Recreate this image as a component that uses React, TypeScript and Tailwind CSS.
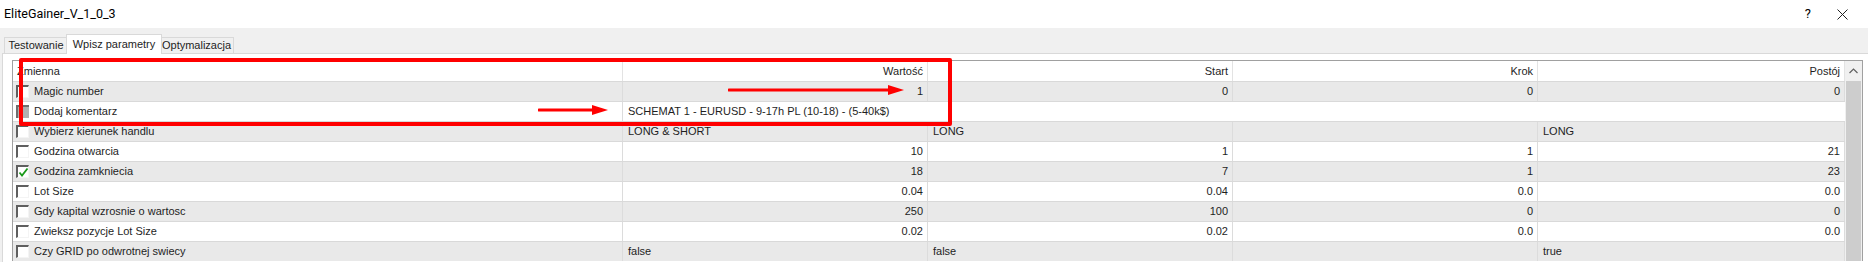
import React from 'react'

type Row = {
    name: string
    box?: 'off' | 'on' | 'grey'
    align?: 'left' | 'right'
    cells?: string[]
    span?: string
}

const rows: Row[] = [
    { name: 'Magic number', align: 'right', cells: ['1', '0', '0', '0'] },
    { name: 'Dodaj komentarz', box: 'grey', span: 'SCHEMAT 1 - EURUSD - 9-17h PL (10-18) - (5-40k$)' },
    { name: 'Wybierz kierunek handlu', align: 'left', cells: ['LONG & SHORT', 'LONG', '', 'LONG'] },
    { name: 'Godzina otwarcia', align: 'right', cells: ['10', '1', '1', '21'] },
    { name: 'Godzina zamkniecia', box: 'on', align: 'right', cells: ['18', '7', '1', '23'] },
    { name: 'Lot Size', align: 'right', cells: ['0.04', '0.04', '0.0', '0.0'] },
    { name: 'Gdy kapital wzrosnie o wartosc', align: 'right', cells: ['250', '100', '0', '0'] },
    { name: 'Zwieksz pozycje Lot Size', align: 'right', cells: ['0.02', '0.02', '0.0', '0.0'] },
    { name: 'Czy GRID po odwrotnej swiecy', align: 'left', cells: ['false', 'false', '', 'true'] },
]

const widths = ['w-[305px]', 'w-[305px]', 'w-[305px]', 'w-[307px]']

const CheckBox = ({ state = 'off' }: { state?: Row['box'] }) => {
    if (state === 'grey') {
        return <span className="block w-[13px] h-[13px] shrink-0 bg-[#b0b0b0] border-t-2 border-l-2 border-t-[#6e6e6e] border-l-[#6e6e6e]" />
    }
    return (
        <span className="relative block w-[13px] h-[13px] shrink-0 bg-white border-t-2 border-l-2 border-r border-b border-t-[#5f5f5f] border-l-[#5f5f5f] border-r-[#f4f4f4] border-b-[#f4f4f4]">
            {state === 'on' && (
                <svg width="11" height="11" viewBox="0 0 11 11" className="absolute left-0 top-0">
                    <path d="M1.5 5.5 L4 8.5 L9.5 1.5" stroke="#1a9a1a" strokeWidth="1.8" fill="none" />
                </svg>
            )}
        </span>
    )
}

const Arrow = ({ x, y, w }: { x: number; y: number; w: number }) => (
    <svg className="absolute" style={{ left: x, top: y - 7 }} width={w} height="14" viewBox={`0 0 ${w} 14`}>
        <line x1="1" y1="7" x2={w - 14} y2="7" stroke="#ff0000" strokeWidth="3" strokeLinecap="round" />
        <polygon points={`${w - 16},2 ${w},7 ${w - 16},12`} fill="#ff0000" />
    </svg>
)

export default function App() {
    return (
        <div className="relative w-[1868px] h-[262px] overflow-hidden bg-[#f0f0f0] font-['Liberation_Sans',Arial,sans-serif] text-[11px] text-[#1e1e1e]">
            {/* title bar */}
            <div className="h-[28px] bg-white flex items-center justify-between pl-[4px] pr-[20px]">
                <span className="font-['Roboto',Arial,sans-serif] text-[12.5px] text-black">EliteGainer_V_1_0_3</span>
                <div className="flex items-center gap-[26px]">
                    <span className="font-['Roboto',Arial,sans-serif] text-[13px] text-black">?</span>
                    <svg width="11" height="11" viewBox="0 0 11 11">
                        <path d="M0.5 0.5 L10.5 10.5 M10.5 0.5 L0.5 10.5" stroke="#222" strokeWidth="1" />
                    </svg>
                </div>
            </div>

            {/* tabs */}
            <div className="flex items-end h-[19px] mt-[6px] ml-[4px]">
                <div className="w-[64px] h-[16px] flex items-center justify-center bg-[#f0f0f0] border border-b-0 border-[#d9d9d9]">Testowanie</div>
                <div className="relative z-10 w-[96px] h-[20px] -mx-[2px] -mb-px flex items-center justify-center bg-white border border-b-0 border-[#d9d9d9]">Wpisz parametry</div>
                <div className="w-[74px] h-[16px] flex items-center justify-center bg-[#f0f0f0] border border-b-0 border-l-0 border-[#d9d9d9]">Optymalizacja</div>
            </div>

            {/* panel */}
            <div className="ml-[2px] w-[1866px] h-[220px] bg-white border-l border-t border-[#d9d9d9] pt-[6px] pl-[9px]">
                <div className="flex w-[1851px] border-t border-l border-r border-[#a0a0a0]">
                    <div className="flex flex-col">
                        <div className="flex h-[20px] bg-white">
                            <div className="w-[610px] border-r border-[#e3e3e3] flex items-center pl-[4px]">Zmienna</div>
                            {['Wartość', 'Start', 'Krok', 'Postój'].map((h, i) => (
                                <div key={h} className={`${widths[i]} border-r border-[#e3e3e3] flex items-center justify-end pr-[4px]`}>{h}</div>
                            ))}
                        </div>
                        {rows.map((r, idx) => (
                            <div key={r.name} className={`flex h-[20px] border-t border-[#d9d9d9] ${idx % 2 === 0 ? 'bg-[#e9e9e9]' : 'bg-white'}`}>
                                <div className="w-[610px] border-r border-[#dcdcdc] flex items-center pl-[3px] gap-[5px]">
                                    <CheckBox state={r.box} />
                                    <span>{r.name}</span>
                                </div>
                                {r.span ? (
                                    <div className="w-[1222px] flex items-center pl-[5px]">{r.span}</div>
                                ) : (
                                    r.cells?.map((c, i) => (
                                        <div
                                            key={i}
                                            className={`${widths[i]} border-r border-[#dcdcdc] flex items-center ${r.align === 'right' ? 'justify-end pr-[4px]' : 'justify-start pl-[5px]'}`}
                                        >
                                            {c}
                                        </div>
                                    ))
                                )}
                            </div>
                        ))}
                    </div>

                    {/* scrollbar */}
                    <div className="w-[17px] flex flex-col bg-[#f0f0f0]">
                        <div className="h-[20px] flex items-center justify-center bg-[#f0f0f0]">
                            <svg width="9" height="6" viewBox="0 0 9 6">
                                <path d="M0.5 5 L4.5 1 L8.5 5" stroke="#606060" strokeWidth="1.2" fill="none" />
                            </svg>
                        </div>
                        <div className="flex-1 mx-[1px] bg-[#cdcdcd]" />
                    </div>
                </div>
            </div>

            {/* annotations */}
            <div className="absolute left-[19px] top-[58px] w-[933px] h-[68px] border-[4px] border-[#ff0000] rounded-[2px]" />
            <Arrow x={728} y={90} w={176} />
            <Arrow x={538} y={110} w={70} />
        </div>
    )
}
